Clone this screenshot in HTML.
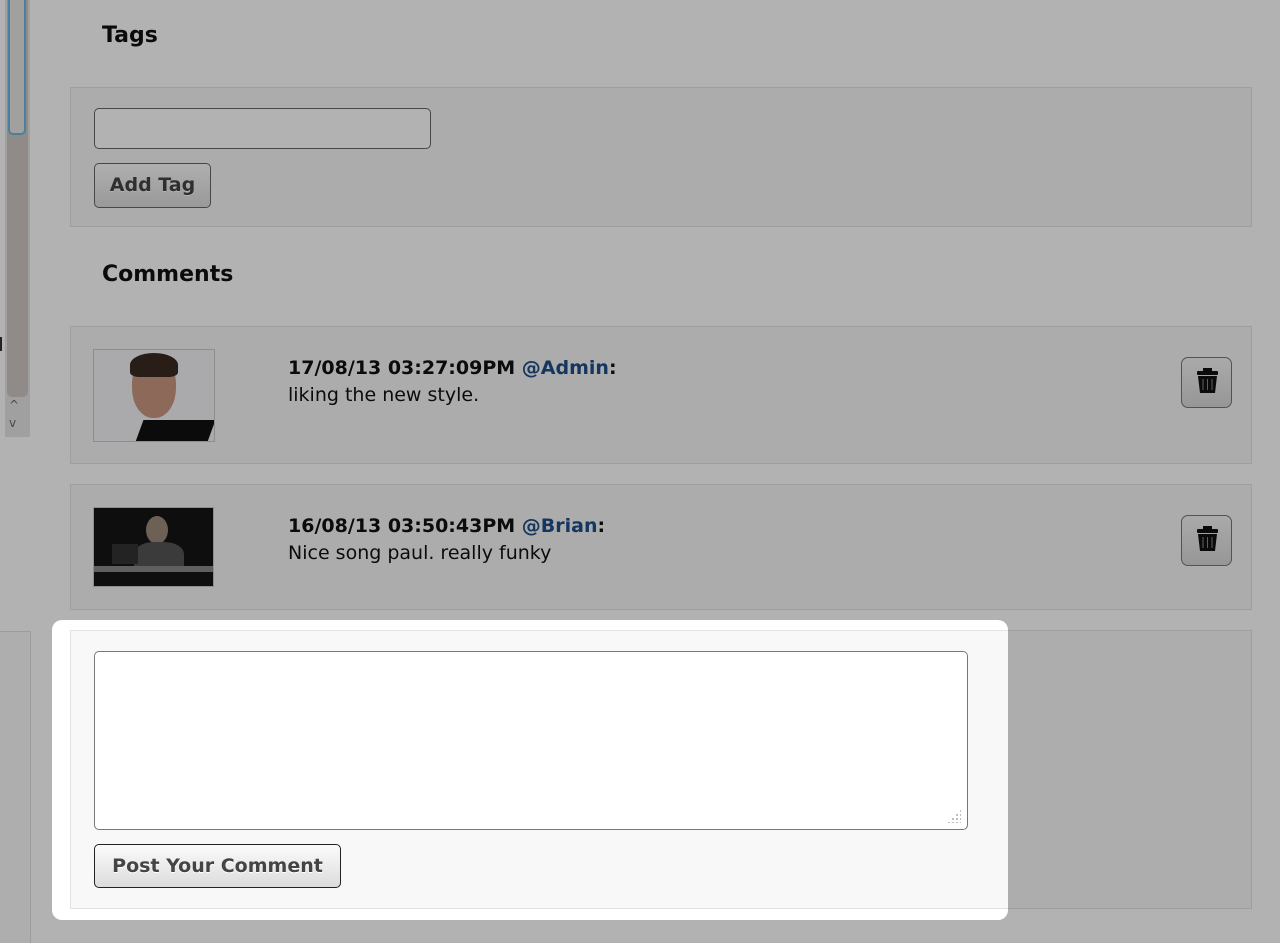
<!DOCTYPE html>
<html><head><meta charset="utf-8"><style>
*{box-sizing:border-box;margin:0;padding:0}
body{width:1280px;height:943px;overflow:hidden;background:#fff;font-family:"DejaVu Sans","Liberation Sans",sans-serif;position:relative;color:#111}
.a{position:absolute}
h2{position:absolute;left:102px;font-size:22px;font-weight:bold}
.panel{position:absolute;left:70px;width:1182px;background:#f6f6f6;border:1px solid #e2e2e2}
.btn{position:absolute;border:1px solid #444;border-radius:5px;background:linear-gradient(#fbfbfb,#dcdcdc);font-weight:bold;font-size:19px;color:#444;text-align:center;text-shadow:0 1px 0 #fff}
.inp{position:absolute;background:#fff;border:1px solid #666;border-radius:5px}
.meta{position:absolute;left:217px;font-size:19px;line-height:27px}
.meta b{color:#111}.meta span{color:#1d4e89;font-weight:bold}
.trash{position:absolute;left:1110px;width:51px;height:51px;border:1px solid #777;border-radius:7px;background:linear-gradient(#f4f4f4,#d8d8d8)}
</style></head><body>
<!-- sidebar -->
<div class="a" style="left:0;top:0;width:30px;height:943px;background:#fff"></div>
<div class="a" style="left:5px;top:0;width:25px;height:437px;background:#e6e6e6"></div>
<div class="a" style="left:7px;top:0;width:21px;height:397px;background:#cfc8c4;border-radius:0 0 5px 5px"></div>
<div class="a" style="left:8px;top:0;width:18px;height:135px;border:2px solid #69b8e0;border-top:none;border-radius:0 0 5px 5px;background:#e8e6e4"></div>
<div class="a" style="left:9px;top:398px;font-size:12px;color:#666">^</div>
<div class="a" style="left:9px;top:416px;font-size:12px;color:#666">v</div>
<div class="a" style="left:0;top:337px;width:2px;height:14px;background:#333"></div>
<div class="a" style="left:0;top:631px;width:31px;height:312px;border-right:1px solid #e0e0e0;border-top:1px solid #e0e0e0;background:#fafafa"></div>

<h2 style="top:23px">Tags</h2>
<div class="panel" style="top:87px;height:140px">
 <div class="inp" style="left:23px;top:20px;width:337px;height:41px"></div>
 <div class="btn" style="left:23px;top:75px;width:117px;height:45px;line-height:43px;border-color:#666">Add Tag</div>
</div>
<h2 style="top:262px">Comments</h2>
<div class="panel" style="top:326px;height:138px">
 <div class="a" style="left:22px;top:22px;width:122px;height:93px;border:1px solid #ccc;background:#f4f4f6;overflow:hidden">
  <div class="a" style="left:38px;top:6px;width:44px;height:62px;border-radius:45% 45% 48% 48%;background:#c9977e"></div>
  <div class="a" style="left:36px;top:3px;width:48px;height:24px;border-radius:50% 50% 20% 20%;background:#3a2a22"></div>
  <div class="a" style="left:44px;top:70px;width:72px;height:30px;background:#111;transform:skewX(-20deg)"></div>
 </div>
 <div class="meta" style="top:28px"><b>17/08/13 03:27:09PM </b><span>@Admin</span><b>:</b><br>liking the new style.</div>
 <div class="trash" style="top:30px"><svg width="51" height="51" viewBox="0 0 51 51"><rect x="15" y="13" width="21" height="4" rx="1" fill="#111"/><rect x="21" y="10" width="9" height="4" fill="#111"/><path d="M16 18h19l-2 17h-15z" fill="#111"/><path d="M21 21v11M25.5 21v11M30 21v11" stroke="#888" stroke-width="1"/></svg></div>
</div>
<div class="panel" style="top:484px;height:126px">
 <div class="a" style="left:22px;top:22px;width:121px;height:80px;border:1px solid #ccc;background:#151515;overflow:hidden">
  <div class="a" style="left:52px;top:8px;width:22px;height:28px;border-radius:50%;background:#9c8a7a"></div>
  <div class="a" style="left:40px;top:34px;width:50px;height:30px;border-radius:40% 40% 0 0;background:#555"></div>
  <div class="a" style="left:0;top:58px;width:121px;height:6px;background:#888"></div>
  <div class="a" style="left:18px;top:36px;width:26px;height:20px;background:#333"></div>
 </div>
 <div class="meta" style="top:28px"><b>16/08/13 03:50:43PM </b><span>@Brian</span><b>:</b><br>Nice song paul. really funky</div>
 <div class="trash" style="top:30px"><svg width="51" height="51" viewBox="0 0 51 51"><rect x="15" y="13" width="21" height="4" rx="1" fill="#111"/><rect x="21" y="10" width="9" height="4" fill="#111"/><path d="M16 18h19l-2 17h-15z" fill="#111"/><path d="M21 21v11M25.5 21v11M30 21v11" stroke="#888" stroke-width="1"/></svg></div>
</div>
<div class="panel" style="top:630px;height:279px;background:#f8f8f8">
 <div class="inp" style="left:23px;top:20px;width:874px;height:179px;border-color:#777">
  <div class="a" style="right:6px;bottom:6px;width:14px;height:14px;background:radial-gradient(circle,#aaa 0.8px,transparent 1px) 0 0/4px 4px;clip-path:polygon(100% 0,100% 100%,0 100%)"></div>
 </div>
 <div class="btn" style="left:23px;top:213px;width:247px;height:44px;line-height:42px;border-color:#222">Post Your Comment</div>
</div>
<!-- overlay spotlight -->
<div class="a" style="left:52px;top:620px;width:956px;height:300px;border-radius:10px;box-shadow:0 0 22px 2000px rgba(0,0,0,.3)"></div>
</body></html>
